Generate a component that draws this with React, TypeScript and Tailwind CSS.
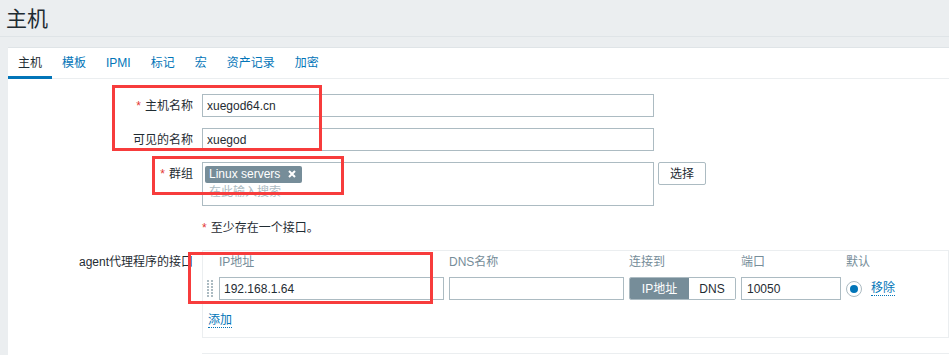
import React from "react";

const FONT = "font-['Liberation_Sans','Noto_Sans_CJK_SC',sans-serif]";

const TABS = ["主机", "模板", "IPMI", "标记", "宏", "资产记录", "加密"];

function Asterisk() {
  return <span className="mr-[4px] text-[#e33734]">*</span>;
}

function Label({ children, required }: { children: React.ReactNode; required?: boolean }) {
  return (
    <div className="flex h-[23px] items-center justify-end self-start whitespace-nowrap">
      {required && <Asterisk />}
      {children}
    </div>
  );
}

function TextBox({ value, className = "" }: { value?: string; className?: string }) {
  return (
    <input
      readOnly
      value={value ?? ""}
      className={`h-[23px] border border-[#acbbc2] bg-white px-[4px] text-[12px] text-[#1f2c33] outline-none ${className}`}
    />
  );
}

// poignée de glisser-déposer (grille de points)
function DragHandle() {
  return (
    <svg width="7" height="17" viewBox="0 0 7 17" aria-hidden>
      {[0, 3, 6, 9, 12, 15].map((y) => (
        <g key={y} fill="#acbbc2">
          <rect x="0" y={y} width="2" height="2" />
          <rect x="4" y={y} width="2" height="2" />
        </g>
      ))}
    </svg>
  );
}

function RedBox({ className }: { className: string }) {
  return <div className={`pointer-events-none absolute border-[3px] border-[#f73c3c] ${className}`} />;
}

export default function App() {
  return (
    <div className={`relative h-[355px] w-[949px] overflow-hidden bg-[#ebeef0] text-[12px] text-[#1f2c33] ${FONT}`}>
      {/* titre */}
      <div className="flex h-[37px] items-center border-b border-[#dfe4e7] pl-[6px]">
        <h1 className="text-[21px] leading-none text-[#1f2c33]">主机</h1>
      </div>

      <div className="ml-[8px] mt-[10px] border-t border-[#dfe4e7] bg-white pb-[20px]">
        {/* onglets */}
        <div className="flex h-[31px] border-b border-[#ebeef0]">
          {TABS.map((t, i) => (
            <div
              key={t}
              className={`relative flex h-full items-center px-[10px] ${i === 0 ? "text-[#1f2c33]" : "text-[#0275b8]"}`}
            >
              {t}
              {i === 0 && <span className="absolute bottom-[-1px] left-0 right-0 h-[3px] bg-[#0275b8]" />}
            </div>
          ))}
        </div>

        {/* formulaire */}
        <div className="grid grid-cols-[185px_1fr] gap-x-[9px] gap-y-[11px] pt-[15px]">
          <Label required>主机名称</Label>
          <TextBox value="xuegod64.cn" className="w-[452px]" />

          <Label>可见的名称</Label>
          <TextBox value="xuegod" className="w-[452px]" />

          <Label required>群组</Label>
          <div className="flex items-start gap-[4px]">
            <div className="h-[44px] w-[452px] border border-[#acbbc2] px-[2px] pt-[2px]">
              <span className="inline-flex h-[17px] items-center gap-[8px] rounded-[2px] bg-[#768d99] pl-[4px] pr-[6px] text-white">
                Linux servers
                <svg width="8" height="8" viewBox="0 0 8 8" aria-hidden>
                  <path d="M1 1 7 7M7 1 1 7" stroke="white" strokeWidth="2" />
                </svg>
              </span>
              <div className="mt-[1px] pl-[4px] leading-[16px] text-[#acbbc2]">在此输入搜索</div>
            </div>
            <button className="h-[23px] w-[48px] rounded-[2px] border border-[#acbbc2] bg-white text-[12px] text-[#1f2c33]">
              选择
            </button>
          </div>

          <div />
          <div className="flex h-[22px] items-center">
            <Asterisk />
            至少存在一个接口。
          </div>

          <Label>agent代理程序的接口</Label>
          <div className="border border-[#ebeef0] pb-[9px]">
            <div className="grid grid-cols-[7px_225px_175px_107px_100px_auto] gap-x-[5px] pl-[4px] text-[#768d99]">
              <div />
              <div className="flex h-[22px] items-center">IP地址</div>
              <div className="flex h-[22px] items-center">DNS名称</div>
              <div className="flex h-[22px] items-center">连接到</div>
              <div className="flex h-[22px] items-center">端口</div>
              <div className="flex h-[22px] items-center">默认</div>
            </div>
            <div className="mt-[4px] grid grid-cols-[7px_225px_175px_107px_100px_auto] items-center gap-x-[5px] pl-[4px]">
              <DragHandle />
              <TextBox value="192.168.1.64" className="w-[225px]" />
              <TextBox className="w-[175px]" />
              <div className="flex h-[23px] w-[107px] overflow-hidden rounded-[2px] border border-[#acbbc2]">
                <div className="flex w-[59px] items-center justify-center bg-[#768d99] text-white">IP地址</div>
                <div className="flex flex-1 items-center justify-center bg-white">DNS</div>
              </div>
              <TextBox value="10050" className="w-[100px] pl-[5px]" />
              <div className="flex items-center gap-[9px]">
                <span className="flex h-[16px] w-[16px] items-center justify-center rounded-full border border-[#acbbc2] bg-white">
                  <span className="h-[8px] w-[8px] rounded-full bg-[#0275b8]" />
                </span>
                <span className="border-b border-dotted border-[#0275b8] leading-[14px] text-[#0275b8]">移除</span>
              </div>
            </div>
            <div className="mt-[12px] flex h-[16px] items-center pl-[5px]">
              <span className="border-b border-dotted border-[#0275b8] leading-[14px] text-[#0275b8]">添加</span>
            </div>
          </div>

          <div />
          <div className="mt-[4px] h-[20px] border-t border-[#ebeef0]" />
        </div>
      </div>

      {/* annotations */}
      <RedBox className="left-[112px] top-[85px] h-[66px] w-[210px]" />
      <RedBox className="left-[152px] top-[156px] h-[39px] w-[192px]" />
      <RedBox className="left-[188px] top-[252px] h-[52px] w-[245px]" />
    </div>
  );
}
